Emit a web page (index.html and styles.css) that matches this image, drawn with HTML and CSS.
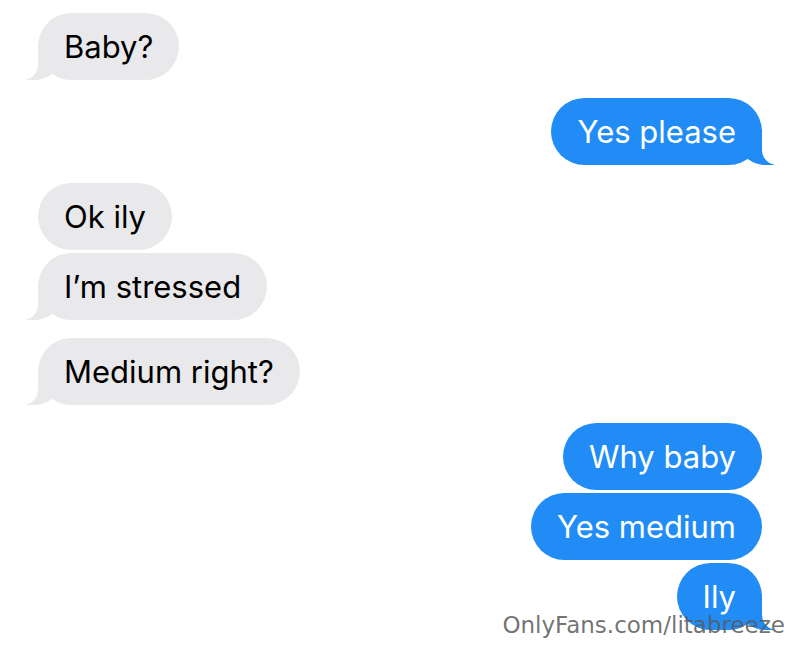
FILE: index.html
```html
<!DOCTYPE html>
<html lang="en">

<head>
    <meta charset="UTF-8">
    <meta name="viewport" content="width=device-width, initial-scale=1.0">
    <title>Messages</title>
    <link rel="stylesheet" href="styles.css">
</head>

<body>
    <main class="chat">
        <div class="bubble in tail">Baby?</div>
        <div class="bubble out tail group">Yes please</div>
        <div class="bubble in group">Ok ily</div>
        <div class="bubble in tail">I’m stressed</div>
        <div class="bubble in tail group">Medium right?</div>
        <div class="bubble out group">Why baby</div>
        <div class="bubble out">Yes medium</div>
        <div class="bubble out tail">Ily</div>
    </main>
    <div class="watermark">OnlyFans.com/litabreeze</div>
</body>

</html>
```

FILE: styles.css
```css
* {
    margin: 0;
    padding: 0;
    box-sizing: border-box;
}

body {
    width: 800px;
    height: 650px;
    background-color: #fff;
    font-family: Inter, "Noto Sans", sans-serif;
    position: relative;
    overflow: hidden;
}

.chat {
    display: flex;
    flex-direction: column;
    gap: 3px;
    padding: 13px 38px 0;
}

.bubble {
    position: relative;
    height: 67px;
    line-height: 67px;
    padding: 0 26px 0 26px;
    border-radius: 34px;
    font-size: 31px;
    white-space: nowrap;
}

.group {
    margin-top: 15px;
}

.in {
    align-self: flex-start;
    background-color: #e9e9eb;
    color: #000;
}

.out {
    align-self: flex-end;
    background-color: #218cf6;
    color: #fff;
}

.tail::before,
.tail::after {
    content: "";
    position: absolute;
    bottom: 0;
    height: 36px;
}

.in.tail::before {
    left: -12px;
    width: 33px;
    background-color: #e9e9eb;
    border-bottom-right-radius: 25px 20px;
}

.in.tail::after {
    left: -40px;
    width: 40px;
    background-color: #fff;
    border-bottom-right-radius: 15px;
}

.out.tail::before {
    right: -12px;
    width: 33px;
    background-color: #218cf6;
    border-bottom-left-radius: 25px 20px;
}

.out.tail::after {
    right: -40px;
    width: 40px;
    background-color: #fff;
    border-bottom-left-radius: 15px;
}

.watermark {
    position: absolute;
    right: 15px;
    bottom: 12px;
    font-family: "DejaVu Sans", sans-serif;
    font-size: 23px;
    color: rgba(90, 90, 90, 0.85);
    z-index: 2;
}
```
